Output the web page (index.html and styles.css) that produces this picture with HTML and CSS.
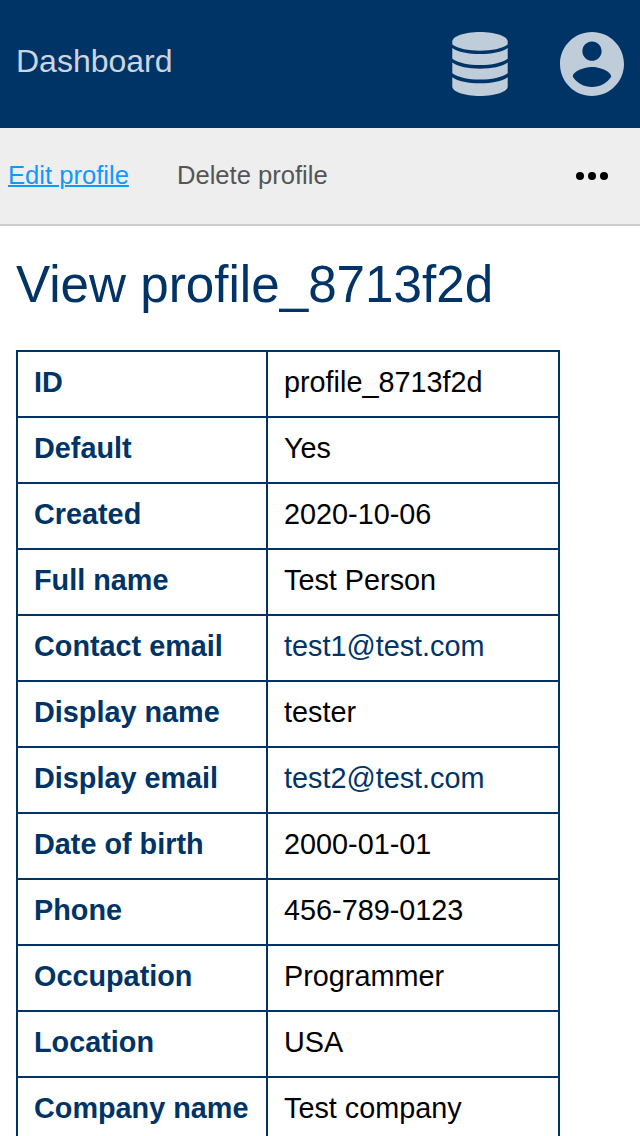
FILE: index.html
```html
<!DOCTYPE html>
<html lang="en">
<head>
<meta charset="utf-8">
<title>View profile</title>
<link rel="stylesheet" href="styles.css">
</head>
<body>
<header class="topbar">
  <a class="brand">Dashboard</a>
  <nav class="icons">
    <svg class="icon-db" viewBox="0 0 56 64"><path d="M28 0C43.500 0 55.700 4.300 55.700 9.600V12.600C50 16.800 39.500 18.700 28 18.700S6 16.800 .3 12.600V9.600C.3 4.300 12.500 0 28 0z"/><path d="M.3 16C6 20.200 16.500 22.100 28 22.100S50 20.200 55.700 16V26.700C50 30.900 39.500 33 28 33S6 30.900 .3 26.700z"/><path d="M.3 30.600C6 34.800 16.500 36.700 28 36.700S50 34.800 55.700 30.600V41.200C50 45.400 39.500 47.500 28 47.500S6 45.400 .3 41.200z"/><path d="M.3 45.200C6 49.400 16.500 51.300 28 51.300S50 49.400 55.700 45.200V54.500C55.700 59.700 43.500 64 28 64S.3 59.700 .3 54.500z"/></svg>
    <svg class="icon-user" viewBox="2 2 20 20"><path d="M12 2C6.480 2 2 6.480 2 12s4.480 10 10 10 10-4.480 10-10S17.520 2 12 2zm0 3c1.660 0 3 1.340 3 3s-1.340 3-3 3-3-1.340-3-3 1.340-3 3-3zm0 14.200c-2.500 0-4.710-1.280-6-3.220.03-1.990 4-3.080 6-3.080 1.990 0 5.970 1.090 6 3.080-1.290 1.940-3.500 3.220-6 3.220z"/></svg>
  </nav>
</header>
<nav class="actions">
  <a class="action active">Edit profile</a>
  <a class="action">Delete profile</a>
  <svg class="more" viewBox="0 0 32 8"><circle cx="4" cy="4" r="4"/><circle cx="16" cy="4" r="4"/><circle cx="28" cy="4" r="4"/></svg>
</nav>
<main class="content">
  <h1 class="title">View profile_8713f2d</h1>
  <table class="details">
    <tr><th>ID</th><td>profile_8713f2d</td></tr>
    <tr><th>Default</th><td>Yes</td></tr>
    <tr><th>Created</th><td>2020-10-06</td></tr>
    <tr><th>Full name</th><td>Test Person</td></tr>
    <tr><th>Contact email</th><td><a class="mail">test1@test.com</a></td></tr>
    <tr><th>Display name</th><td>tester</td></tr>
    <tr><th>Display email</th><td><a class="mail">test2@test.com</a></td></tr>
    <tr><th>Date of birth</th><td>2000-01-01</td></tr>
    <tr><th>Phone</th><td>456-789-0123</td></tr>
    <tr><th>Occupation</th><td>Programmer</td></tr>
    <tr><th>Location</th><td>USA</td></tr>
    <tr><th>Company name</th><td>Test company</td></tr>
  </table>
</main>
</body>
</html>
```
FILE: styles.css
```css
* { box-sizing: border-box; }
html, body { height: 1136px; overflow: hidden; }
body { margin: 0; background: #fff; color: #000; font-family: "Liberation Sans", Arial, sans-serif; }
.topbar { display: flex; align-items: center; justify-content: space-between; height: 128px; padding: 0 16px; background: #003366; color: #ccd6e0; }
.brand { font-size: 32px; line-height: 36px; padding-bottom: 6px; }
.icons { display: flex; align-items: center; gap: 52px; }
.icons svg { display: block; height: 64px; fill: #bfccd9; }
.icon-db { width: 56px; }
.icon-user { width: 64px; }
.actions { display: flex; align-items: center; gap: 48px; height: 98px; padding: 0 32px 0 8px; background: #eee; border-bottom: 2px solid #ccc; }
.action { font-size: 25.6px; line-height: 30px; color: #555; padding-bottom: 2px; }
.active { color: #1199ff; text-decoration: underline; text-decoration-thickness: 2px; }
.more { width: 32px; height: 8px; margin-left: auto; }
.content { padding: 30px 16px 0; }
.title { margin: 0 0 36px; font-size: 51.2px; line-height: 58px; font-weight: 400; color: #003366; }
.details { width: 544px; border-collapse: collapse; table-layout: fixed; font-size: 28.8px; }
.details th, .details td { height: 66px; padding: 0 16px 4px; border: 2px solid #003366; text-align: left; white-space: nowrap; line-height: 34px; }
.details th { width: 250px; color: #003366; font-weight: 700; }
.mail { color: #003366; }
```
